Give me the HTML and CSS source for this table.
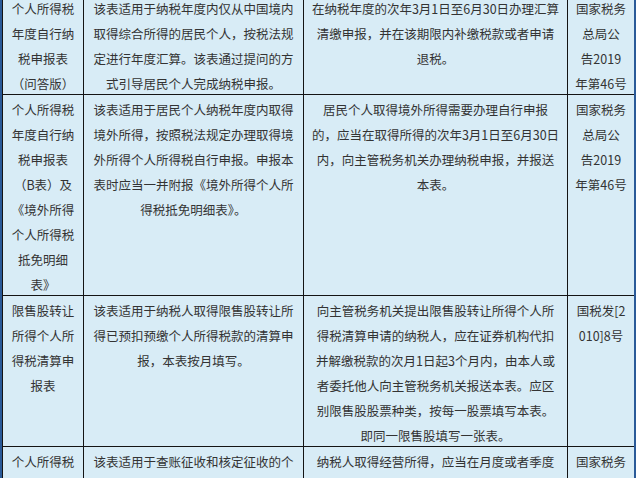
FILE: index.html
```html
<!DOCTYPE html>
<html lang="zh-CN">
<head>
<meta charset="utf-8">
<title>个人所得税申报表</title>
<link rel="stylesheet" href="styles.css">
</head>
<body>
<div class="sheet">
  <div class="grid">
    <div class="cell">个人所得税<br>年度自行纳<br>税申报表<br>（问答版）</div>
    <div class="cell">该表适用于纳税年度内仅从中国境内<br>取得综合所得的居民个人，按税法规<br>定进行年度汇算。该表通过提问的方<br>式引导居民个人完成纳税申报。</div>
    <div class="cell">在纳税年度的次年3月1日至6月30日办理汇算<br>清缴申报，并在该期限内补缴税款或者申请<br>退税。</div>
    <div class="cell">国家税务<br>总局公<br>告2019<br>年第46号</div>

    <div class="cell">个人所得税<br>年度自行纳<br>税申报表<br>（B表）及<br>《境外所得<br>个人所得税<br>抵免明细<br>表》</div>
    <div class="cell">该表适用于居民个人纳税年度内取得<br>境外所得，按照税法规定办理取得境<br>外所得个人所得税自行申报。申报本<br>表时应当一并附报《境外所得个人所<br>得税抵免明细表》。</div>
    <div class="cell">居民个人取得境外所得需要办理自行申报<br>的，应当在取得所得的次年3月1日至6月30日<br>内，向主管税务机关办理纳税申报，并报送<br>本表。</div>
    <div class="cell">国家税务<br>总局公<br>告2019<br>年第46号</div>

    <div class="cell">限售股转让<br>所得个人所<br>得税清算申<br>报表</div>
    <div class="cell">该表适用于纳税人取得限售股转让所<br>得已预扣预缴个人所得税款的清算申<br>报，本表按月填写。</div>
    <div class="cell">向主管税务机关提出限售股转让所得个人所<br>得税清算申请的纳税人，应在证券机构代扣<br>并解缴税款的次月1日起3个月内，由本人或<br>者委托他人向主管税务机关报送本表。应区<br>别限售股股票种类，按每一股票填写本表。<br>即同一限售股填写一张表。</div>
    <div class="cell">国税发[2<br>010]8号</div>

    <div class="cell">个人所得税</div>
    <div class="cell">该表适用于查账征收和核定征收的个</div>
    <div class="cell">纳税人取得经营所得，应当在月度或者季度</div>
    <div class="cell">国家税务</div>
  </div>
</div>
</body>
</html>
```

FILE: styles.css
```css
html, body {
  margin: 0;
  padding: 0;
  background: #2a5a98;
  overflow: hidden;
}

.sheet {
  padding: 0 2px 0 2px;
  margin-top: -7px;
}

.grid {
  display: grid;
  grid-template-columns: 80px 219px 263px 66px;
  grid-template-rows: 100px 200px 150px 80px;
  gap: 1px;
  padding: 1px 0 1px 1px;
  background: #141414;
  font-family: "Noto Sans CJK SC", "Noto Sans", sans-serif;
  font-size: 12.5px;
  line-height: 25px;
  color: #333;
}

.cell {
  background: #d8ecf6;
  text-align: center;
  padding-top: 2px;
  white-space: nowrap;
  overflow: hidden;
}
```
